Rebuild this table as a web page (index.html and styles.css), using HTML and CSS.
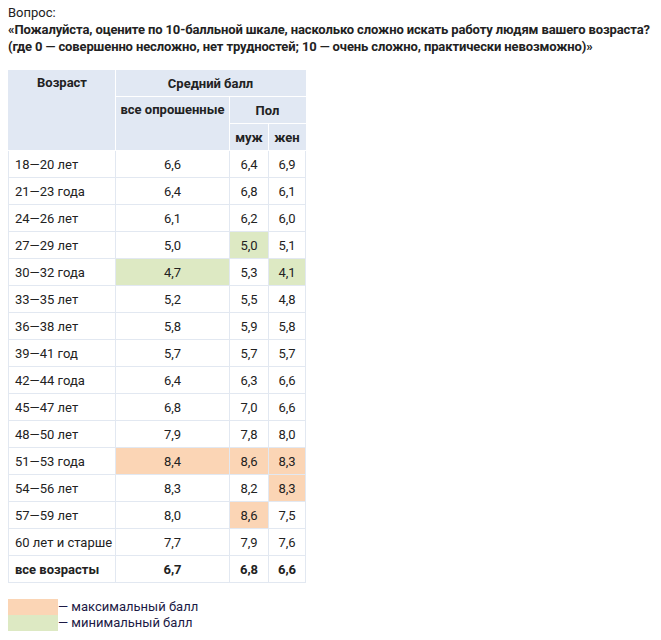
FILE: index.html
```html
<!DOCTYPE html>
<html lang="ru">
<head>
<meta charset="utf-8">
<link rel="stylesheet" href="styles.css">
</head>
<body>
<div class="question">
  <div class="label">Вопрос:</div>
  <div class="text">«Пожалуйста, оцените по 10-балльной шкале, насколько сложно искать работу людям вашего возраста?<br>(где 0 — совершенно несложно, нет трудностей; 10 — очень сложно, практически невозможно)»</div>
</div>
<table class="data">
  <colgroup>
    <col class="c-age"><col class="c-all"><col class="c-m"><col class="c-f">
  </colgroup>
  <thead>
    <tr class="h1"><th rowspan="3" class="th-age">Возраст</th><th colspan="3">Средний балл</th></tr>
    <tr><th rowspan="2" class="th-all">все опрошенные</th><th colspan="2">Пол</th></tr>
    <tr><th>муж</th><th>жен</th></tr>
  </thead>
  <tbody>
    <tr><td>18—20 лет</td><td>6,6</td><td>6,4</td><td>6,9</td></tr>
    <tr><td>21—23 года</td><td>6,4</td><td>6,8</td><td>6,1</td></tr>
    <tr><td>24—26 лет</td><td>6,1</td><td>6,2</td><td>6,0</td></tr>
    <tr><td>27—29 лет</td><td>5,0</td><td class="min">5,0</td><td>5,1</td></tr>
    <tr><td>30—32 года</td><td class="min">4,7</td><td>5,3</td><td class="min">4,1</td></tr>
    <tr><td>33—35 лет</td><td>5,2</td><td>5,5</td><td>4,8</td></tr>
    <tr><td>36—38 лет</td><td>5,8</td><td>5,9</td><td>5,8</td></tr>
    <tr><td>39—41 год</td><td>5,7</td><td>5,7</td><td>5,7</td></tr>
    <tr><td>42—44 года</td><td>6,4</td><td>6,3</td><td>6,6</td></tr>
    <tr><td>45—47 лет</td><td>6,8</td><td>7,0</td><td>6,6</td></tr>
    <tr><td>48—50 лет</td><td>7,9</td><td>7,8</td><td>8,0</td></tr>
    <tr><td>51—53 года</td><td class="max">8,4</td><td class="max">8,6</td><td class="max">8,3</td></tr>
    <tr><td>54—56 лет</td><td>8,3</td><td>8,2</td><td class="max">8,3</td></tr>
    <tr><td>57—59 лет</td><td>8,0</td><td class="max">8,6</td><td>7,5</td></tr>
    <tr><td>60 лет и старше</td><td>7,7</td><td>7,9</td><td>7,6</td></tr>
    <tr class="total"><td>все возрасты</td><td>6,7</td><td>6,8</td><td>6,6</td></tr>
  </tbody>
</table>
<div class="legend">
  <div class="legend-row"><span class="swatch max"></span><span class="legend-text">— максимальный балл</span></div>
  <div class="legend-row"><span class="swatch min"></span><span class="legend-text">— минимальный балл</span></div>
</div>
</body>
</html>
```
FILE: styles.css
```css
html, body {
  margin: 0;
  padding: 0;
  background: #fff;
}
body {
  padding: 4px 8px 8px 8px;
  font-family: Roboto, "Liberation Sans", sans-serif;
  font-size: 13px;
  color: #222;
}
.question {
  line-height: 17px;
}
.question .text {
  font-weight: bold;
  white-space: nowrap;
  letter-spacing: -0.12px;
}
.data {
  margin-top: 15px;
  border-collapse: collapse;
  table-layout: fixed;
  width: 297px;
}
.c-age { width: 107px; }
.c-all { width: 114px; }
.c-m { width: 39px; }
.c-f { width: 37px; }
.data th {
  background: #e1e8f3;
  border: 1px solid #fff;
  height: 26px;
  padding: 0 2px;
  font-weight: bold;
  text-align: center;
  vertical-align: middle;
  white-space: nowrap;
}
.data .h1 th {
  height: 25px;
}
.data th.th-age,
.data th.th-all {
  vertical-align: top;
  padding-top: 5px;
}
.data th.th-age {
  padding-top: 4px;
}
.data thead tr:first-child th {
  border-top-color: #e1e8f3;
}
.data thead th:first-child {
  border-left-color: #e1e8f3;
}
.data thead tr:first-child th:last-child,
.data thead tr:nth-child(2) th:last-child,
.data thead tr:nth-child(3) th:last-child {
  border-right-color: #e1e8f3;
}
.data td {
  border: 1px solid #e2e8f1;
  height: 26px;
  padding: 0 2px;
  text-align: center;
  vertical-align: middle;
  white-space: nowrap;
}
.data td:first-child {
  text-align: left;
  padding-left: 6px;
}
.data .total td {
  font-weight: bold;
}
.data td.min { background: #dde9c3; }
.data td.max { background: #fbd5b5; }
.legend {
  margin-top: 16px;
}
.legend-row {
  display: flex;
  align-items: center;
  height: 16px;
}
.swatch {
  width: 50px;
  height: 16px;
  display: block;
}
.swatch.max { background: #fbd5b5; }
.swatch.min { background: #dde9c3; }
.legend-text {
  color: #1c1a45;
  line-height: 16px;
}
```
